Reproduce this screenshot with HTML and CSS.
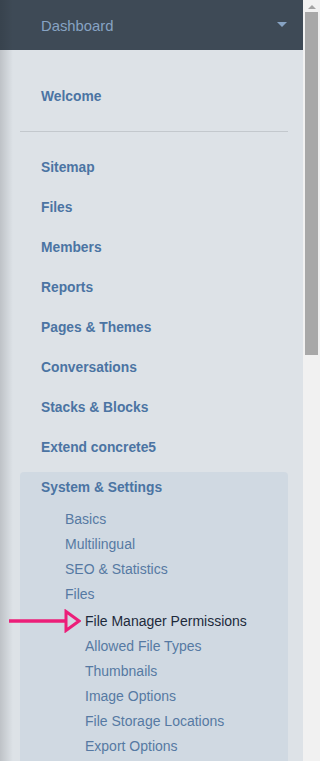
FILE: index.html
```html
<!DOCTYPE html>
<html lang="en">
<head>
  <meta charset="UTF-8" />
  <meta name="viewport" content="width=device-width, initial-scale=1" />
  <title>Dashboard</title>
  <link rel="stylesheet" href="styles.css">
</head>
<body>
  <div class="page">
    <aside class="sidebar">
      <header class="dash-header">
        <span class="dash-title">Dashboard</span>
        <span class="caret"></span>
      </header>

      <nav class="dash-nav">
        <a class="nav-item" href="#">Welcome</a>
        <hr class="divider" />
        <a class="nav-item" href="#">Sitemap</a>
        <a class="nav-item" href="#">Files</a>
        <a class="nav-item" href="#">Members</a>
        <a class="nav-item" href="#">Reports</a>
        <a class="nav-item" href="#">Pages &amp; Themes</a>
        <a class="nav-item" href="#">Conversations</a>
        <a class="nav-item" href="#">Stacks &amp; Blocks</a>
        <a class="nav-item" href="#">Extend concrete5</a>

        <div class="nav-group">
          <a class="group-title" href="#">System &amp; Settings</a>
          <ul class="sub-list">
            <li><a href="#">Basics</a></li>
            <li><a href="#">Multilingual</a></li>
            <li><a href="#">SEO &amp; Statistics</a></li>
            <li>
              <a href="#">Files</a>
              <ul class="sub-list nested">
                <li class="active">
                  <span class="pointer">
                    <svg width="72" height="24" viewBox="0 0 72 24">
                      <path d="M0 12H58" stroke="#ec1e79" stroke-width="3.5" fill="none" />
                      <path d="M57 2.5L70 12L57 21.5Z" stroke="#ec1e79" stroke-width="3" fill="none" stroke-linejoin="miter" />
                    </svg>
                  </span>
                  <a href="#">File Manager Permissions</a>
                </li>
                <li><a href="#">Allowed File Types</a></li>
                <li><a href="#">Thumbnails</a></li>
                <li><a href="#">Image Options</a></li>
                <li><a href="#">File Storage Locations</a></li>
                <li><a href="#">Export Options</a></li>
              </ul>
            </li>
          </ul>
        </div>
      </nav>
    </aside>

    <div class="scrollbar">
      <span class="scroll-up"></span>
      <span class="scroll-thumb"></span>
    </div>
  </div>
</body>
</html>
```

FILE: styles.css
```css
:root {
  --header-bg: #3e4a56;
  --panel-bg: #dde2e7;
  --group-bg: #d0d9e2;
  --link: #4b74a3;
  --sub-link: #5679a3;
  --active: #1d2a3b;
  --divider: #c3c8cd;
  --edge: rgba(0, 0, 0, 0.14);
}
html, body {
  margin: 0;
  height: 100%;
}
body {
  font-family: "Liberation Sans", Arial, sans-serif;
  font-size: 14px;
  background: var(--panel-bg);
  overflow: hidden;
}
a {
  text-decoration: none;
}
.page {
  display: flex;
  height: 761px;
}
.sidebar {
  flex: 1;
  background: linear-gradient(to right, var(--edge), rgba(0, 0, 0, 0) 13px), var(--panel-bg);
}
.dash-header {
  height: 50px;
  display: flex;
  align-items: center;
  justify-content: space-between;
  padding: 0 16px 0 41px;
  background: linear-gradient(to right, rgba(0, 0, 0, 0.1), rgba(0, 0, 0, 0) 13px), var(--header-bg);
}
.dash-title {
  color: #87a3c3;
  font-size: 14.8px;
  margin-top: 1px;
}
.caret {
  width: 0;
  height: 0;
  border-left: 5px solid transparent;
  border-right: 5px solid transparent;
  border-top: 5px solid #87a3c3;
  margin-top: -1px;
}
.dash-nav {
  padding: 27px 15px 0 20px;
}
.nav-item {
  display: block;
  height: 40px;
  line-height: 40px;
  padding-left: 21px;
  color: var(--link);
  font-weight: bold;
  font-size: 13.8px;
}
.divider {
  border: none;
  border-top: 1px solid var(--divider);
  margin: 14px 0 16px;
}
.nav-group {
  margin-top: 4px;
  background: var(--group-bg);
  border-radius: 4px;
  padding-bottom: 20px;
}
.group-title {
  display: block;
  line-height: 32px;
  padding-left: 21px;
  color: var(--link);
  font-weight: bold;
  font-size: 13.8px;
}
.sub-list {
  list-style: none;
  margin: 3px 0 0;
  padding: 0 0 0 45px;
}
.sub-list li {
  line-height: 25px;
}
.sub-list a {
  color: var(--sub-link);
}
.sub-list.nested {
  margin-top: 2px;
  padding-left: 20px;
}
.sub-list .active {
  position: relative;
}
.sub-list .active a {
  color: var(--active);
}
.pointer {
  position: absolute;
  left: -76px;
  top: 0;
  line-height: 0;
}
.scrollbar {
  width: 17px;
  background: #f1f1f1;
  display: flex;
  flex-direction: column;
  align-items: center;
}
.scroll-up {
  width: 0;
  height: 0;
  margin-top: 5px;
  border-left: 4px solid transparent;
  border-right: 4px solid transparent;
  border-bottom: 4px solid #a3a3a3;
}
.scroll-thumb {
  width: 13px;
  height: 343px;
  margin-top: 3px;
  background: #a8a8a8;
}
```
